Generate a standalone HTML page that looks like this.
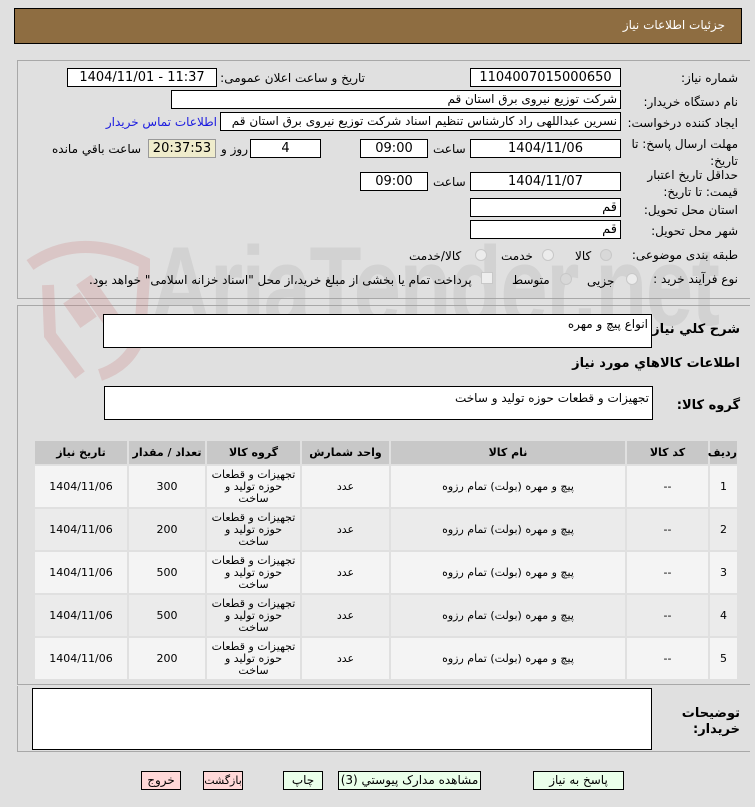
<!DOCTYPE html>
<html><head><meta charset="utf-8"><style>
body{margin:0;width:755px;height:807px;background:#e0e0e0;font-family:Tahoma,"DejaVu Sans","Noto Sans CJK SC",sans-serif;font-size:12px;color:#000;position:relative;overflow:hidden}
.a{position:absolute;white-space:nowrap}
.box{position:absolute;background:#fff;border:1px solid #000;box-sizing:border-box;text-align:center;font-size:13px;line-height:17px;overflow:hidden;white-space:nowrap}
.lbl{position:absolute;direction:rtl;text-align:right;white-space:nowrap;font-size:12px}
.t{position:absolute;white-space:nowrap;font-size:12px;direction:rtl}
.panel{position:absolute;border:1px solid #a8a8a8;box-sizing:border-box}
.rad{position:absolute;width:12px;height:12px;border-radius:50%;border:1px solid #c8c8c8;background:#ececec;box-sizing:border-box}
table{position:absolute;left:33px;top:439px;width:706px;border-collapse:separate;border-spacing:2px;direction:rtl;font-size:11px;table-layout:fixed}
th{background:#c8c8c8;height:23px;padding:0;font-weight:bold;font-size:11px;line-height:12px}
td{background:#f4f4f4;height:41px;padding:0;text-align:center;line-height:12px;font-size:11px;overflow:hidden}
tr:nth-child(odd) td{background:#ebebeb}
.btn{position:absolute;top:771px;height:19px;border:1px solid #000;box-sizing:border-box;text-align:center;font-size:12px;line-height:17px;background:#eaffea;white-space:nowrap}
</style></head><body>
<div class="a" style="left:14px;top:8px;width:728px;height:36px;background:#8e6d41;border:1px solid #000;box-sizing:border-box"></div>
<div class="a" style="right:30px;top:18px;color:#fff;font-size:12px">جزئیات اطلاعات نیاز</div>

<div class="panel" style="left:17px;top:60px;width:733px;height:239px;border-right:none"></div>
<div class="panel" style="left:17px;top:305px;width:733px;height:380px;border-right:none"></div>
<div class="panel" style="left:17px;top:686px;width:733px;height:66px;border-right:none;border-top:none"></div>

<!-- watermark -->
<svg class="a" style="left:20px;top:225px" width="130" height="170" viewBox="0 0 130 170"><path d="M10 40 Q60 5 125 38 L120 110 Q110 140 80 150" fill="none" stroke="rgba(200,120,120,0.25)" stroke-width="12"/><path d="M28 60 L30 110 L60 150" fill="none" stroke="rgba(200,120,120,0.25)" stroke-width="12"/><rect x="50" y="70" width="20" height="30" fill="rgba(200,120,120,0.25)" transform="rotate(-35 60 85)"/><rect x="70" y="50" width="18" height="55" fill="rgba(200,120,120,0.25)" transform="rotate(-35 79 77)"/></svg>
<div class="a" style="left:150px;top:222px;font-family:'Liberation Sans',sans-serif;font-weight:bold;font-size:112px;color:rgba(160,160,160,0.22);transform:scaleX(0.76);transform-origin:left top;letter-spacing:-2px">AriaTender.net</div>

<div class="lbl" style="right:17px;top:71px">شماره نیاز:</div>
<div class="box" style="left:470px;top:68px;width:151px;height:19px">1104007015000650</div>
<div class="lbl" style="right:390px;top:71px">تاریخ و ساعت اعلان عمومی:</div>
<div class="box" style="left:67px;top:68px;width:150px;height:19px">1404/11/01 - 11:37</div>

<div class="lbl" style="right:17px;top:95px">نام دستگاه خریدار:</div>
<div class="box" style="left:171px;top:90px;width:450px;height:19px;text-align:right;padding-right:3px;direction:rtl;font-size:12px">شرکت توزیع نیروی برق استان قم</div>

<div class="lbl" style="right:17px;top:116px">ایجاد کننده درخواست:</div>
<div class="box" style="left:220px;top:112px;width:401px;height:19px;text-align:right;padding-right:3px;direction:rtl;font-size:12px">نسرین عبداللهی راد کارشناس تنظیم اسناد شرکت توزیع نیروی برق استان قم</div>
<div class="lbl" style="right:538px;top:115px;color:#1a1ae0">اطلاعات تماس خریدار</div>

<div class="lbl" style="right:17px;top:136px;line-height:17px">مهلت ارسال پاسخ: تا<br>تاریخ:</div>
<div class="box" style="left:470px;top:139px;width:151px;height:19px">1404/11/06</div>
<div class="t" style="left:433px;top:142px">ساعت</div>
<div class="box" style="left:360px;top:139px;width:68px;height:19px">09:00</div>
<div class="box" style="left:250px;top:139px;width:71px;height:19px">4</div>
<div class="t" style="left:221px;top:142px">روز و</div>
<div class="box" style="left:148px;top:139px;width:68px;height:19px;background:#efeccc;border-color:#999">20:37:53</div>
<div class="t" style="left:52px;top:142px">ساعت باقي مانده</div>

<div class="lbl" style="right:17px;top:167px;line-height:17px">حداقل تاریخ اعتبار<br>قیمت: تا تاریخ:</div>
<div class="box" style="left:470px;top:172px;width:151px;height:19px">1404/11/07</div>
<div class="t" style="left:433px;top:175px">ساعت</div>
<div class="box" style="left:360px;top:172px;width:68px;height:19px">09:00</div>

<div class="lbl" style="right:17px;top:203px">استان محل تحویل:</div>
<div class="box" style="left:470px;top:198px;width:151px;height:19px;text-align:right;padding-right:3px">قم</div>
<div class="lbl" style="right:17px;top:224px">شهر محل تحویل:</div>
<div class="box" style="left:470px;top:220px;width:151px;height:19px;text-align:right;padding-right:3px">قم</div>

<div class="lbl" style="right:17px;top:248px">طبقه بندی موضوعی:</div>
<div class="rad" style="left:600px;top:249px;background:#d8d8d8"></div>
<div class="t" style="left:575px;top:249px">کالا</div>
<div class="rad" style="left:542px;top:249px"></div>
<div class="t" style="left:501px;top:249px">خدمت</div>
<div class="rad" style="left:475px;top:249px"></div>
<div class="t" style="left:409px;top:249px">کالا/خدمت</div>

<div class="lbl" style="right:17px;top:272px">نوع فرآیند خرید :</div>
<div class="rad" style="left:626px;top:273px"></div>
<div class="t" style="left:587px;top:274px">جزیی</div>
<div class="rad" style="left:560px;top:273px;background:#d8d8d8"></div>
<div class="t" style="left:512px;top:273px">متوسط</div>
<div style="position:absolute;left:481px;top:272px;width:12px;height:12px;border:1px solid #c8c8c8;background:#eee;box-sizing:border-box"></div>
<div class="t" style="left:89px;top:273px">پرداخت تمام یا بخشی از مبلغ خرید،از محل "اسناد خزانه اسلامی" خواهد بود.</div>

<div class="lbl" style="right:15px;top:322px;font-weight:bold;font-size:13px">شرح كلي نياز:</div>
<div class="box" style="left:103px;top:314px;width:549px;height:34px;text-align:right;padding-right:3px;line-height:14px;padding-top:2px;direction:rtl;font-size:12px">انواع پیچ و مهره</div>
<div class="lbl" style="right:15px;top:356px;font-weight:bold;font-size:13px">اطلاعات كالاهاي مورد نياز</div>
<div class="lbl" style="right:15px;top:398px;font-weight:bold;font-size:13px">گروه کالا:</div>
<div class="box" style="left:104px;top:386px;width:549px;height:34px;text-align:right;padding-right:3px;line-height:14px;padding-top:4px;direction:rtl;font-size:12px">تجهیزات و قطعات حوزه تولید و ساخت</div>

<table>
<colgroup><col style="width:27px"><col style="width:81px"><col style="width:234px"><col style="width:87px"><col style="width:93px"><col style="width:76px"><col></colgroup>
<tr><th>رديف</th><th>کد کالا</th><th>نام کالا</th><th>واحد شمارش</th><th>گروه کالا</th><th>تعداد / مقدار</th><th>تاریخ نیاز</th></tr>
<tr><td>1</td><td>--</td><td>پیچ و مهره (بولت) تمام رزوه</td><td>عدد</td><td>تجهیزات و قطعات<br>حوزه تولید و<br>ساخت</td><td>300</td><td>1404/11/06</td></tr>
<tr><td>2</td><td>--</td><td>پیچ و مهره (بولت) تمام رزوه</td><td>عدد</td><td>تجهیزات و قطعات<br>حوزه تولید و<br>ساخت</td><td>200</td><td>1404/11/06</td></tr>
<tr><td>3</td><td>--</td><td>پیچ و مهره (بولت) تمام رزوه</td><td>عدد</td><td>تجهیزات و قطعات<br>حوزه تولید و<br>ساخت</td><td>500</td><td>1404/11/06</td></tr>
<tr><td>4</td><td>--</td><td>پیچ و مهره (بولت) تمام رزوه</td><td>عدد</td><td>تجهیزات و قطعات<br>حوزه تولید و<br>ساخت</td><td>500</td><td>1404/11/06</td></tr>
<tr><td>5</td><td>--</td><td>پیچ و مهره (بولت) تمام رزوه</td><td>عدد</td><td>تجهیزات و قطعات<br>حوزه تولید و<br>ساخت</td><td>200</td><td>1404/11/06</td></tr>
</table>

<div class="lbl" style="right:15px;top:706px;font-weight:bold;font-size:13px;line-height:16px">توضیحات<br>خریدار:</div>
<div class="box" style="left:32px;top:688px;width:620px;height:62px"></div>

<div class="btn" style="left:533px;width:91px">پاسخ به نیاز</div>
<div class="btn" style="left:338px;width:143px">مشاهده مدارک پیوستي (3)</div>
<div class="btn" style="left:283px;width:40px">چاپ</div>
<div class="btn" style="left:203px;width:40px;background:#ffd8d8;font-size:11px">بازگشت</div>
<div class="btn" style="left:141px;width:40px;background:#ffd8d8">خروج</div>
</body></html>
